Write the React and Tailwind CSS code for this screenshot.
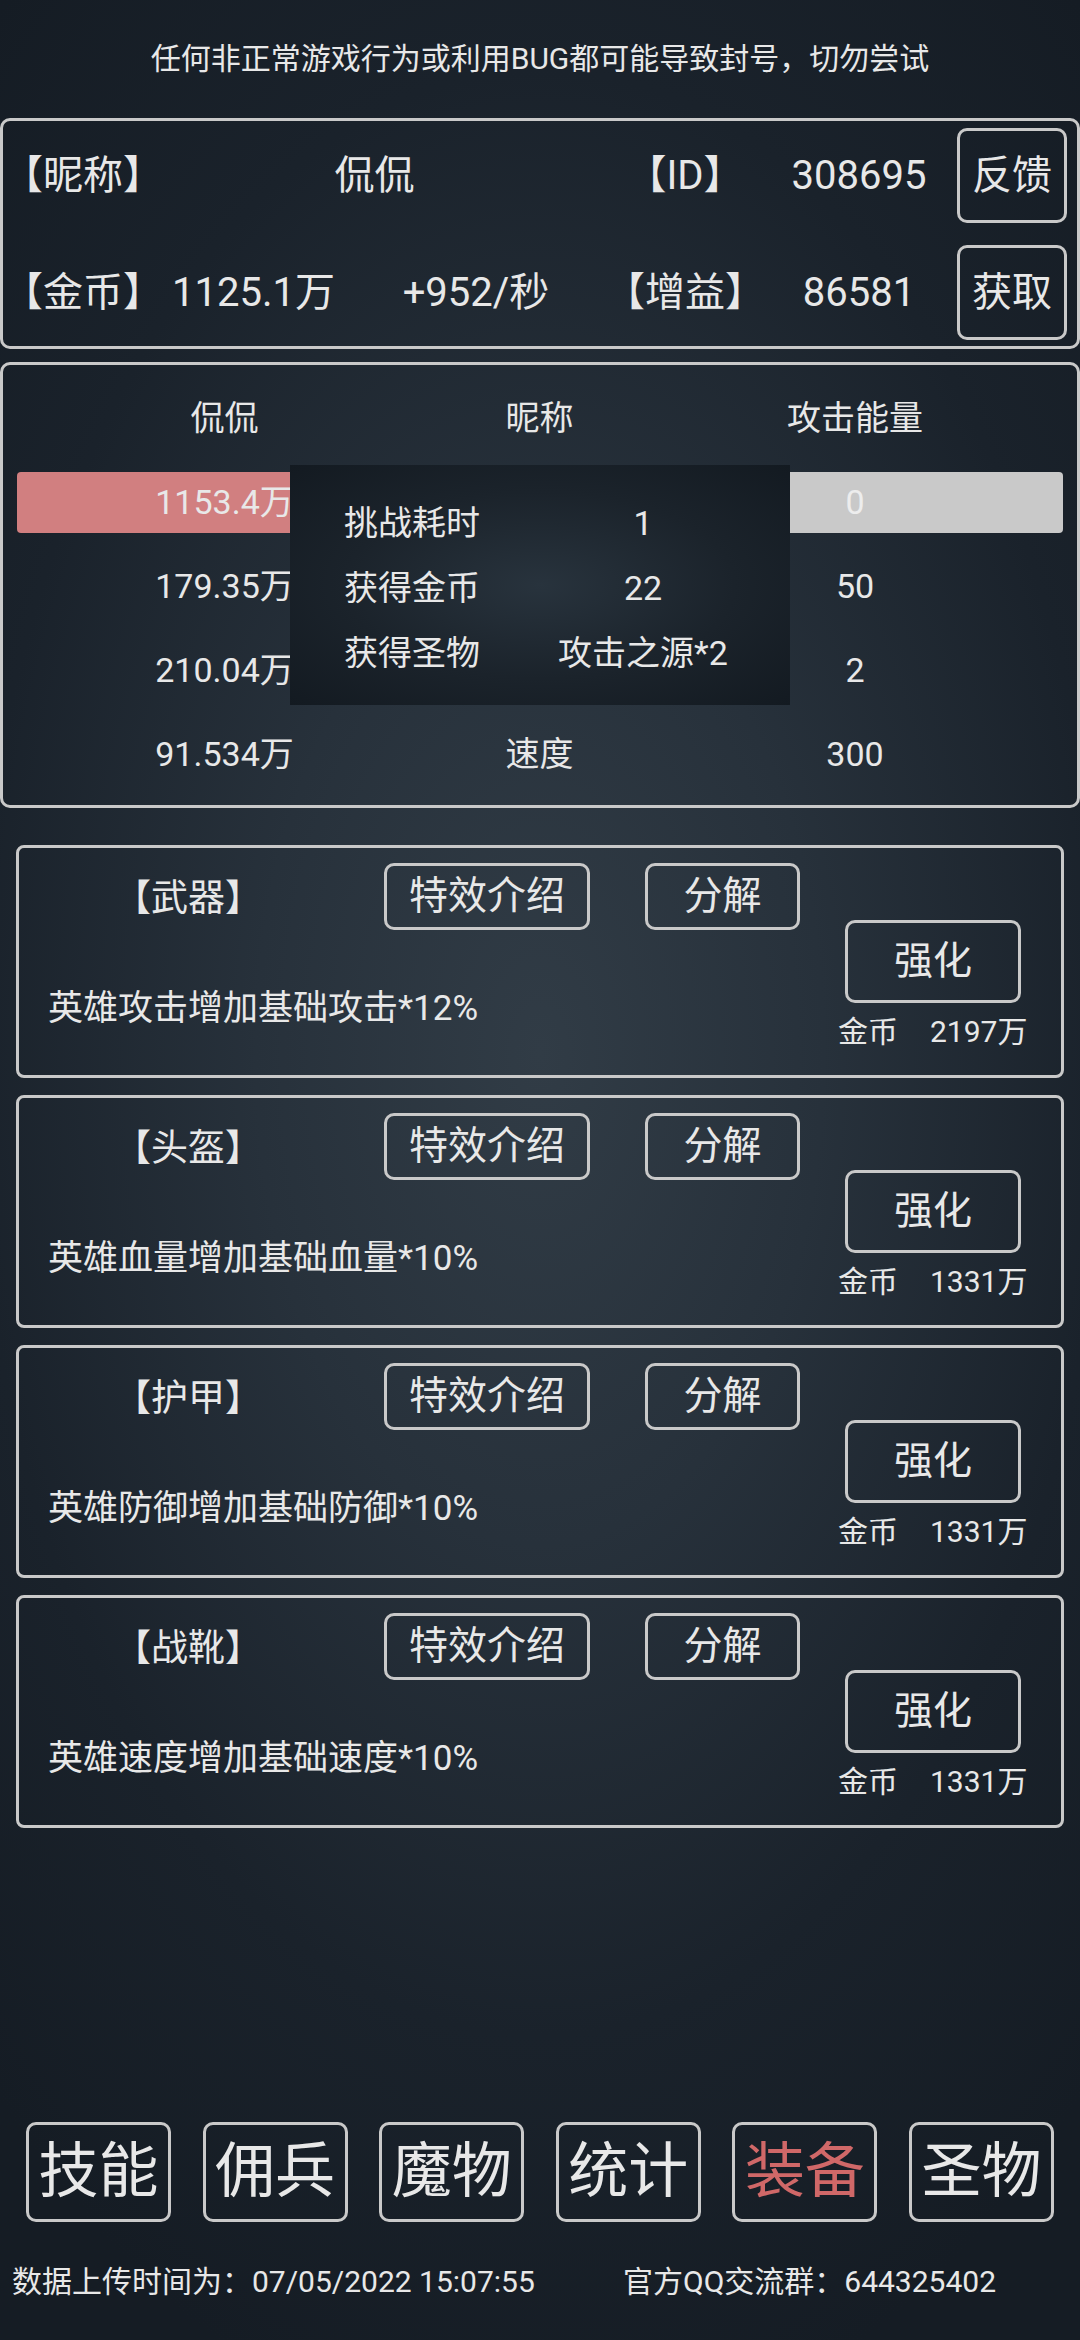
import React from "react";

const Btn = ({ className = "", children }) => (
  <div
    className={
      "flex items-center justify-center border-[3px] border-[#c9c9c9] rounded-[10px] " +
      className
    }
  >
    {children}
  </div>
);

const cards = [
  { title: "【武器】", desc: "英雄攻击增加基础攻击*12%", cost: "2197万" },
  { title: "【头盔】", desc: "英雄血量增加基础血量*10%", cost: "1331万" },
  { title: "【护甲】", desc: "英雄防御增加基础防御*10%", cost: "1331万" },
  { title: "【战靴】", desc: "英雄速度增加基础速度*10%", cost: "1331万" },
];

const nav = ["技能", "佣兵", "魔物", "统计", "装备", "圣物"];

export default function App() {
  return (
    <div className="relative w-[1080px] h-[2340px] overflow-hidden bg-[radial-gradient(ellipse_75%_60%_at_50%_45%,#313c46_0%,#27313b_35%,#1a222b_70%,#151c24_100%)] text-[#e8e8e8] font-[Roboto,'Noto_Sans_CJK_SC',sans-serif]">
      {/* warning */}
      <div className="h-[118px] flex items-center justify-center text-[30px] leading-none">
        任何非正常游戏行为或利用BUG都可能导致封号，切勿尝试
      </div>

      {/* top panel */}
      <div className="h-[231px] border-[3px] border-[#c9c9c9] rounded-[10px] pt-[7px] flex flex-col gap-[22px] text-[40px] leading-none">
        <div className="flex items-center h-[95px]">
          <div className="w-[149px] text-center">【昵称】</div>
          <div className="w-[445px] text-center">侃侃</div>
          <div className="w-[176px] text-center">【ID】</div>
          <div className="w-[172px] text-center">308695</div>
          <Btn className="ml-[12px] w-[110px] h-[95px]">反馈</Btn>
        </div>
        <div className="flex items-center h-[95px]">
          <div className="w-[149px] text-center">【金币】</div>
          <div className="w-[203px] text-center">1125.1万</div>
          <div className="w-[242px] text-center">+952/秒</div>
          <div className="w-[176px] text-center">【增益】</div>
          <div className="w-[172px] text-center">86581</div>
          <Btn className="ml-[12px] w-[110px] h-[95px]">获取</Btn>
        </div>
      </div>

      {/* battle panel */}
      <div className="relative mt-[13px] h-[446px] border-[3px] border-[#c9c9c9] rounded-[10px] pt-[11px] px-[14px] text-[34px] leading-none">
        <div className="grid grid-cols-[415px_215px_416px] h-[84px] items-center text-center">
          <div>侃侃</div>
          <div>昵称</div>
          <div>攻击能量</div>
        </div>
        <div className="grid grid-cols-[415px_215px_416px] h-[84px] items-center text-center">
          <div className="h-[61px] rounded-[4px] bg-[#d17f80] flex items-center justify-center">
            1153.4万
          </div>
          <div className="h-[61px] bg-[#9a9a9a]" />
          <div className="h-[61px] rounded-[4px] bg-[#c9c9c9] flex items-center justify-center text-[#ededed]">
            0
          </div>
        </div>
        <div className="grid grid-cols-[415px_215px_416px] h-[84px] items-center text-center">
          <div>179.35万</div>
          <div />
          <div>50</div>
        </div>
        <div className="grid grid-cols-[415px_215px_416px] h-[84px] items-center text-center">
          <div>210.04万</div>
          <div />
          <div>2</div>
        </div>
        <div className="grid grid-cols-[415px_215px_416px] h-[84px] items-center text-center">
          <div>91.534万</div>
          <div>速度</div>
          <div>300</div>
        </div>

        {/* result popup */}
        <div className="absolute left-[287px] top-[100px] w-[500px] h-[240px] pt-[25px] bg-[radial-gradient(ellipse_at_50%_50%,#28333d_0%,#1b232b_55%,#131a21_100%)]">
          {[
            ["挑战耗时", "1"],
            ["获得金币", "22"],
            ["获得圣物", "攻击之源*2"],
          ].map(([k, v]) => (
            <div key={k} className="flex items-center h-[65px]">
              <div className="ml-[54px] w-[172px]">{k}</div>
              <div className="w-[254px] text-center">{v}</div>
            </div>
          ))}
        </div>
      </div>

      {/* equipment cards */}
      <div className="mt-[37px] mx-[16px] flex flex-col gap-[17px]">
        {cards.map((c) => (
          <div
            key={c.title}
            className="h-[233px] border-[3px] border-[#c9c9c9] rounded-[8px] flex"
          >
            <div className="w-[807px] flex flex-col">
              <div className="flex items-center mt-[15px] h-[67px]">
                <div className="w-[338px] text-center text-[37px] leading-none mt-[3px]">
                  {c.title}
                </div>
                <Btn className="ml-[27px] w-[206px] h-[67px] text-[39px] leading-none rounded-[9px]">
                  特效介绍
                </Btn>
                <Btn className="ml-[55px] w-[155px] h-[67px] text-[39px] leading-none rounded-[9px]">
                  分解
                </Btn>
              </div>
              <div className="ml-[29px] mt-[61px] text-[35px] leading-none">
                {c.desc}
              </div>
            </div>
            <div className="flex flex-col">
              <Btn className="mt-[72px] ml-[19px] w-[176px] h-[83px] text-[39px] leading-none rounded-[9px]">
                强化
              </Btn>
              <div className="mt-[14px] ml-[12px] flex text-[30px] leading-none">
                <span>金币</span>
                <span className="ml-[32px]">{c.cost}</span>
              </div>
            </div>
          </div>
        ))}
      </div>

      {/* bottom nav */}
      <div className="mt-[294px] px-[26px] flex justify-between">
        {nav.map((n) => (
          <Btn
            key={n}
            className={
              "w-[145px] h-[100px] text-[60px] leading-none " +
              (n === "装备" ? "text-[#d06868]" : "")
            }
          >
            {n}
          </Btn>
        ))}
      </div>

      {/* footer */}
      <div className="mt-[45px] flex text-[30px] leading-none">
        <div className="ml-[12px] w-[611px]">数据上传时间为：07/05/2022 15:07:55</div>
        <div>官方QQ交流群：644325402</div>
      </div>
    </div>
  );
}
